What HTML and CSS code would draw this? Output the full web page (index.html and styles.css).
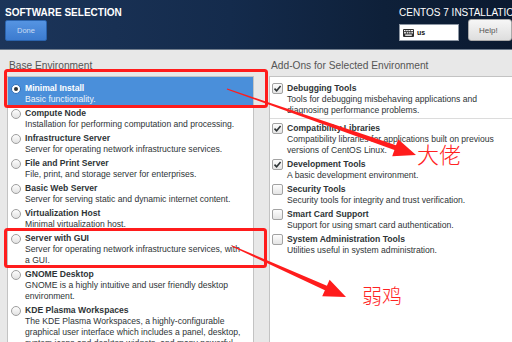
FILE: index.html
```html
<!DOCTYPE html>
<html lang="zh-CN">

<head>
    <meta charset="UTF-8">
    <title>Software Selection</title>
    <link rel="stylesheet" href="styles.css">
</head>

<body>
    <div class="topbar">
        <div class="topbar-left">
            <h1>SOFTWARE SELECTION</h1>
            <button class="btn-done">Done</button>
        </div>
        <div class="topbar-right">
            <div class="product">CENTOS 7 INSTALLATION</div>
            <div class="topbar-controls">
                <div class="kbd-layout">
                    <svg width="11" height="8" viewBox="0 0 11 8">
                        <rect x="0" y="0" width="11" height="8" rx="1" fill="#2e2e2e"/>
                        <g fill="#fff">
                            <rect x="1" y="1" width="1.5" height="1.2"/><rect x="3.2" y="1" width="1.5" height="1.2"/><rect x="5.4" y="1" width="1.5" height="1.2"/><rect x="7.6" y="1" width="2.4" height="1.2"/>
                            <rect x="1" y="3.2" width="2.2" height="1.2"/><rect x="3.9" y="3.2" width="1.5" height="1.2"/><rect x="6.1" y="3.2" width="1.5" height="1.2"/><rect x="8.3" y="3.2" width="1.7" height="1.2"/>
                            <rect x="2.2" y="5.5" width="6.6" height="1.3"/>
                        </g>
                    </svg>
                    <span>us</span>
                </div>
                <button class="btn-help">Help!</button>
            </div>
        </div>
    </div>

    <div class="content">
        <div class="column column-base">
            <div class="column-label">Base Environment</div>
            <div class="list">
                <div class="item selected">
                    <span class="radio"></span>
                    <div class="item-text">
                        <div class="item-title">Minimal Install</div>
                        <div class="item-desc">Basic functionality.</div>
                    </div>
                </div>
                <div class="item">
                    <span class="radio"></span>
                    <div class="item-text">
                        <div class="item-title">Compute Node</div>
                        <div class="item-desc">Installation for performing computation and processing.</div>
                    </div>
                </div>
                <div class="item">
                    <span class="radio"></span>
                    <div class="item-text">
                        <div class="item-title">Infrastructure Server</div>
                        <div class="item-desc">Server for operating network infrastructure services.</div>
                    </div>
                </div>
                <div class="item">
                    <span class="radio"></span>
                    <div class="item-text">
                        <div class="item-title">File and Print Server</div>
                        <div class="item-desc">File, print, and storage server for enterprises.</div>
                    </div>
                </div>
                <div class="item">
                    <span class="radio"></span>
                    <div class="item-text">
                        <div class="item-title">Basic Web Server</div>
                        <div class="item-desc">Server for serving static and dynamic internet content.</div>
                    </div>
                </div>
                <div class="item">
                    <span class="radio"></span>
                    <div class="item-text">
                        <div class="item-title">Virtualization Host</div>
                        <div class="item-desc">Minimal virtualization host.</div>
                    </div>
                </div>
                <div class="item">
                    <span class="radio"></span>
                    <div class="item-text">
                        <div class="item-title">Server with GUI</div>
                        <div class="item-desc">Server for operating network infrastructure services, with a GUI.</div>
                    </div>
                </div>
                <div class="item">
                    <span class="radio"></span>
                    <div class="item-text">
                        <div class="item-title">GNOME Desktop</div>
                        <div class="item-desc">GNOME is a highly intuitive and user friendly desktop environment.</div>
                    </div>
                </div>
                <div class="item">
                    <span class="radio"></span>
                    <div class="item-text">
                        <div class="item-title">KDE Plasma Workspaces</div>
                        <div class="item-desc">The KDE Plasma Workspaces, a highly-configurable graphical user interface which includes a panel, desktop, system icons and desktop widgets, and many powerful KDE applications.</div>
                    </div>
                </div>
            </div>
        </div>

        <div class="column column-addons">
            <div class="column-label">Add-Ons for Selected Environment</div>
            <div class="list">
                <div class="item">
                    <span class="check on"><svg width="9" height="9" viewBox="0 0 9 9"><polyline points="1.5,4.6 3.6,6.8 7.6,2" fill="none" stroke="#2e3436" stroke-width="1.6"/></svg></span>
                    <div class="item-text">
                        <div class="item-title">Debugging Tools</div>
                        <div class="item-desc">Tools for debugging misbehaving applications and diagnosing performance problems.</div>
                    </div>
                </div>
                <div class="separator"></div>
                <div class="item">
                    <span class="check on"><svg width="9" height="9" viewBox="0 0 9 9"><polyline points="1.5,4.6 3.6,6.8 7.6,2" fill="none" stroke="#2e3436" stroke-width="1.6"/></svg></span>
                    <div class="item-text">
                        <div class="item-title">Compatibility Libraries</div>
                        <div class="item-desc">Compatibility libraries for applications built on previous versions of CentOS Linux.</div>
                    </div>
                </div>
                <div class="item">
                    <span class="check on"><svg width="9" height="9" viewBox="0 0 9 9"><polyline points="1.5,4.6 3.6,6.8 7.6,2" fill="none" stroke="#2e3436" stroke-width="1.6"/></svg></span>
                    <div class="item-text">
                        <div class="item-title">Development Tools</div>
                        <div class="item-desc">A basic development environment.</div>
                    </div>
                </div>
                <div class="item">
                    <span class="check"></span>
                    <div class="item-text">
                        <div class="item-title">Security Tools</div>
                        <div class="item-desc">Security tools for integrity and trust verification.</div>
                    </div>
                </div>
                <div class="item">
                    <span class="check"></span>
                    <div class="item-text">
                        <div class="item-title">Smart Card Support</div>
                        <div class="item-desc">Support for using smart card authentication.</div>
                    </div>
                </div>
                <div class="item">
                    <span class="check"></span>
                    <div class="item-text">
                        <div class="item-title">System Administration Tools</div>
                        <div class="item-desc">Utilities useful in system administration.</div>
                    </div>
                </div>
            </div>
        </div>
    </div>

    <!-- annotations drawn on top of the screenshot -->
    <svg class="marks" width="512" height="342" viewBox="0 0 512 342">
        <rect x="5.5" y="70.5" width="261" height="36" rx="2" fill="none" stroke="#ff1c1c" stroke-width="3"/>
        <rect x="5.5" y="229.5" width="260" height="37" rx="2" fill="none" stroke="#ff1c1c" stroke-width="3"/>
        <polygon points="227.2,88.5 396,145.3 398.2,139.2 416,155 392.2,156.2 394.4,150.1 226.8,89.5" fill="#ff1c1c"/>
        <polygon points="232.2,245.5 326.9,285.7 329.6,279.8 346,297 322.2,296.2 324.9,290.3 231.8,246.5" fill="#ff1c1c"/>
    </svg>
    <span class="note note-boss">大佬</span>
    <span class="note note-noob">弱鸡</span>
</body>

</html>
```

FILE: styles.css
```css
body {
    margin: 0;
    width: 512px;
    height: 342px;
    overflow: hidden;
    position: relative;
    display: flex;
    flex-direction: column;
    background-color: #e8e8e8;
    font-family: "Liberation Sans", Arial, sans-serif;
    color: #2e3436;
}

/* top bar */
.topbar {
    height: 49px;
    flex: none;
    display: flex;
    padding-left: 5px;
    background: linear-gradient(to right, #1c355a, #142b4c 45%, #0e2039 75%, #0b1a30);
    border-bottom: 1px solid #6f7c8c;
}

.topbar-left {
    padding-top: 7px;
}

.topbar h1 {
    margin: 0;
    font-size: 10px;
    line-height: 11px;
    font-weight: bold;
    color: #fff;
}

.btn-done {
    display: block;
    margin-top: 2px;
    width: 42px;
    height: 21px;
    padding: 0;
    border: 1px solid #2a63ad;
    border-radius: 2px;
    background: linear-gradient(#5594e2, #3c7bcf);
    color: #c9dcf3;
    font-family: inherit;
    font-size: 7.5px;
}

.topbar-right {
    margin-left: auto;
    width: 113px;
    padding-top: 7px;
}

.product {
    font-size: 10px;
    line-height: 11px;
    color: #fff;
    white-space: nowrap;
}

.topbar-controls {
    display: flex;
    align-items: flex-end;
    gap: 9px;
    margin-top: 1px;
}

.kbd-layout {
    width: 71px;
    height: 17px;
    box-sizing: border-box;
    display: flex;
    align-items: center;
    gap: 3px;
    padding-left: 3px;
    background-color: #fff;
    border: 1px solid #8c96a3;
}

.kbd-layout span {
    font-size: 7px;
    font-weight: bold;
    color: #111;
}

.btn-help {
    flex: none;
    width: 44px;
    height: 22px;
    padding: 0 0 0 10px;
    text-align: left;
    border: 1px solid #a9a9a9;
    border-radius: 3px;
    background: linear-gradient(#f6f6f6, #dedede);
    color: #555;
    font-family: inherit;
    font-size: 8px;
}

/* main area */
.content {
    flex: 1;
    display: flex;
    padding-top: 9px;
    min-height: 0;
}

.column {
    display: flex;
    flex-direction: column;
}

.column-base {
    margin-left: 7px;
    width: 247px;
}

.column-addons {
    margin-left: 15px;
    flex: 1;
}

.column-label {
    padding-left: 2px;
    margin-bottom: 3px;
    font-size: 10.2px;
    line-height: 14px;
    color: #555;
    white-space: nowrap;
}

.list {
    flex: 1;
    background-color: #fff;
    border: 1px solid #c3c3c3;
    border-bottom: none;
}

.column-base .list {
    overflow: hidden;
}

.column-addons .list {
    border-right: none;
    padding-top: 3px;
}

.item {
    display: flex;
    align-items: flex-start;
    padding-top: 3px;
}

.item-text {
    flex: 1;
    font-size: 8.6px;
    line-height: 11px;
}

.item-title {
    font-weight: bold;
}

.column-base .item-text {
    padding-right: 9px;
}

.column-addons .item-text {
    padding-right: 12px;
}

.item.selected {
    padding-top: 6px;
    background-color: #4a8fda;
    color: #fff;
}

.item.selected .item-desc {
    color: #eef4fb;
}

.radio {
    flex: none;
    position: relative;
    width: 10px;
    height: 10px;
    box-sizing: border-box;
    margin: 0.5px 4px 0 3px;
    border: 1px solid #9e9e9e;
    border-radius: 50%;
    background: linear-gradient(#fdfdfd, #e2e2e2);
}

.selected .radio {
    background: #fff;
    border-color: #2f6db5;
}

.selected .radio::after {
    content: "";
    position: absolute;
    left: 2px;
    top: 2px;
    width: 4px;
    height: 4px;
    border-radius: 50%;
    background-color: #2e3436;
}

.check {
    flex: none;
    display: flex;
    align-items: center;
    justify-content: center;
    width: 11px;
    height: 11px;
    box-sizing: border-box;
    margin: 0 4px 0 2px;
    border: 1px solid #a2a2a2;
    border-radius: 2px;
    background: linear-gradient(#fdfdfd, #e4e4e4);
}

.separator {
    height: 1px;
    margin: 1.5px 0;
    background-color: #dcdcdc;
}

/* annotations */
.marks {
    position: absolute;
    left: 0;
    top: 0;
    pointer-events: none;
}

.note {
    position: absolute;
    font-family: "Noto Sans CJK SC", sans-serif;
    font-weight: 300;
    color: #ff2222;
    line-height: 1;
    white-space: nowrap;
}

.note-boss {
    left: 417px;
    top: 142px;
    font-size: 22px;
}

.note-noob {
    left: 362px;
    top: 286px;
    font-size: 20px;
}
```
